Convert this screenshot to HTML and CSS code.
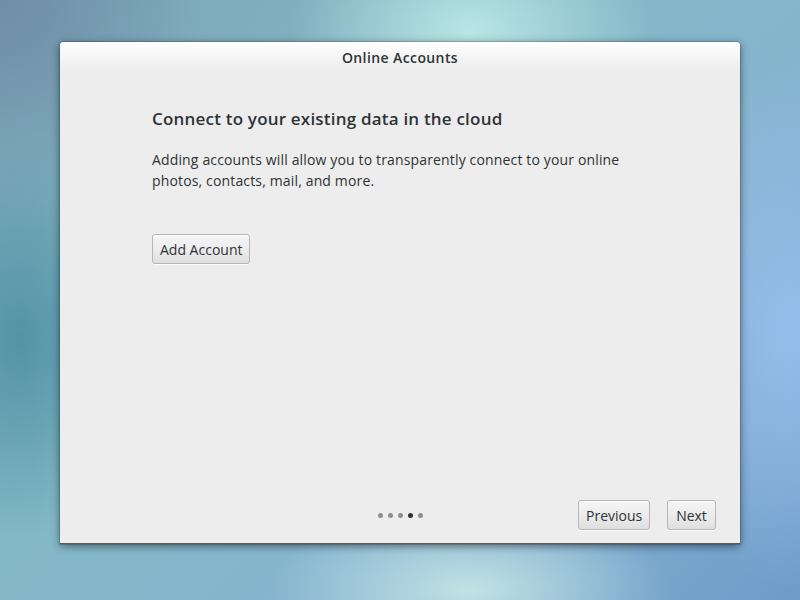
FILE: index.html
```html
<!DOCTYPE html>
<html>
<head>
<meta charset="utf-8">
<link rel="stylesheet" href="styles.css">
</head>
<body>
<div class="desktop">
  <div class="window">
    <div class="titlebar">Online Accounts</div>
    <div class="content">
      <h1 class="heading">Connect to your existing data in the cloud</h1>
      <p class="desc">Adding accounts will allow you to transparently connect to your online<br>photos, contacts, mail, and more.</p>
      <div class="add-row"><button class="btn">Add Account</button></div>
    </div>
    <div class="footer">
      <div class="spacer"></div>
      <div class="dots">
        <span class="dot"></span><span class="dot"></span><span class="dot"></span><span class="dot active"></span><span class="dot"></span>
      </div>
      <div class="nav">
        <button class="btn btn-prev">Previous</button>
        <button class="btn btn-next">Next</button>
      </div>
    </div>
  </div>
</div>
</body>
</html>
```
FILE: styles.css
```css
html, body {
  margin: 0;
  padding: 0;
  width: 800px;
  height: 600px;
  overflow: hidden;
}
body {
  font-family: "Open Sans", "DejaVu Sans", sans-serif;
  color: #2e3436;
}
.desktop {
  width: 800px;
  height: 600px;
  padding: 42px 0 0 60px;
  box-sizing: border-box;
  background:
    radial-gradient(ellipse 180px 120px at 470px 30px, rgba(190,235,232,0.9), rgba(190,235,232,0) 100%),
    radial-gradient(ellipse 200px 90px at 470px 590px, rgba(200,232,230,0.9), rgba(200,232,230,0) 100%),
    radial-gradient(ellipse 140px 260px at 790px 330px, rgba(150,190,235,0.95), rgba(150,190,235,0) 100%),
    radial-gradient(ellipse 120px 200px at 20px 340px, rgba(70,140,160,0.8), rgba(70,140,160,0) 100%),
    radial-gradient(ellipse 200px 200px at 0px 0px, rgba(110,140,165,0.9), rgba(110,140,165,0) 100%),
    linear-gradient(135deg, #7aa3b5 0%, #84b9c6 40%, #86b3d2 70%, #6d9cc8 100%);
}
.window {
  width: 680px;
  height: 502px;
  background: #ededed;
  border-radius: 4px 4px 0 0;
  box-shadow: 0 2px 8px rgba(0,0,0,0.5), 0 0 0 1px rgba(0,0,0,0.15);
  display: flex;
  flex-direction: column;
  border-bottom: 1px solid #5a5a5a;
  box-sizing: border-box;
}
.titlebar {
  height: 32px;
  line-height: 32px;
  text-align: center;
  font-size: 14px;
  font-weight: 600;
  letter-spacing: 0.4px;
  color: #2e3436;
  border-radius: 4px 4px 0 0;
  background: linear-gradient(to bottom, #ffffff 0%, #f2f2f2 60%, #ededed 100%);
}
.content {
  padding: 34px 0 0 92px;
  flex: 1;
}
.heading {
  margin: 0;
  font-size: 17px;
  font-weight: 600;
  letter-spacing: 0.2px;
  line-height: 22px;
  color: #2e3436;
}
.desc {
  margin: 19px 0 0 0;
  font-size: 14px;
  letter-spacing: 0.15px;
  line-height: 21px;
  color: #2e3436;
}
.add-row {
  margin-top: 43px;
}
.btn {
  font-family: inherit;
  font-size: 14px;
  color: #2e3436;
  height: 30px;
  padding: 0 7px;
  border: 1px solid #b6b6b3;
  border-radius: 3px;
  background: linear-gradient(to bottom, #f6f6f6 0%, #eaeaea 60%, #dfdfdf 100%);
  box-shadow: inset 0 1px #ffffff, 0 1px rgba(255,255,255,0.8);
  cursor: default;
}
.footer {
  display: grid;
  grid-template-columns: 1fr auto 1fr;
  align-items: center;
  padding: 0 24px 13px 0;
  height: 30px;
}
.dots {
  display: flex;
  gap: 5px;
  margin-left: 24px;
}
.dot {
  width: 5px;
  height: 5px;
  border-radius: 50%;
  background: #8f8f8f;
}
.dot.active {
  background: #2e3436;
}
.nav {
  display: flex;
  justify-content: flex-end;
  gap: 17px;
}
.btn-prev { width: 72px; }
.btn-next { width: 49px; }
```
